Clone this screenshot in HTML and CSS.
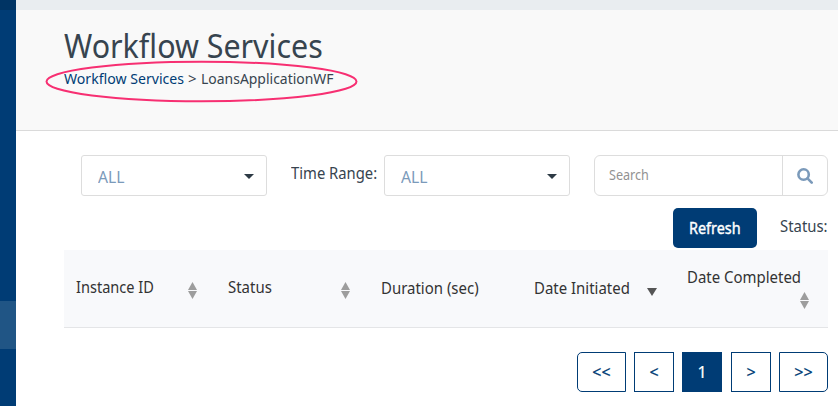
FILE: index.html
```
<!DOCTYPE html>
<html lang="en">
<head>
<meta charset="utf-8">
<title>Workflow Services</title>
<link rel="stylesheet" href="styles.css">
</head>
<body>
<svg class="symbols" width="0" height="0" aria-hidden="true">
  <symbol id="sort" viewBox="0 0 9 17"><path d="M4.5 0 9 8H0zM0 9h9L4.5 17z"/></symbol>
  <symbol id="caret" viewBox="0 0 10 5"><path d="M0 0h10L5 5z"/></symbol>
</svg>
<aside class="sidebar"><div class="side-top"></div><div class="side-active"></div></aside>
<div class="page">
  <div class="topbar"></div>
  <header class="heading">
    <h1><span class="fit title">Workflow Services</span></h1>
    <nav class="crumbs"><a class="fit crumb-link">Workflow Services</a><span class="fit crumb-sep">&gt;</span><span class="fit crumb-now">LoansApplicationWF</span></nav>
    <svg class="ring" width="314" height="44" viewBox="0 0 314 44"><ellipse cx="156.5" cy="21.5" rx="155" ry="19.8"/></svg>
  </header>
  <main>
    <div class="filters">
      <div class="select"><span class="fit all">ALL</span><svg class="caret" width="10" height="5"><use href="#caret"/></svg></div>
      <label class="range"><span class="fit range-text">Time Range:</span></label>
      <div class="select"><span class="fit all">ALL</span><svg class="caret" width="10" height="5"><use href="#caret"/></svg></div>
      <div class="search">
        <div class="search-input"><span class="fit search-text">Search</span></div>
        <div class="search-button"><svg width="16" height="16" viewBox="0 0 16 16"><circle cx="6.6" cy="6.5" r="5.2"/><path d="m10.5 10.4 4.2 4.2"/></svg></div>
      </div>
    </div>
    <div class="actions"><button class="refresh"><span class="fit refresh-text">Refresh</span></button><span class="status"><span class="fit status-text">Status:</span></span></div>
    <div class="table-head">
      <div class="th"><span class="fit narrow">Instance ID</span><svg class="sort" width="9" height="17"><use href="#sort"/></svg></div>
      <div class="th"><span class="fit label">Status</span><svg class="sort" width="9" height="17"><use href="#sort"/></svg></div>
      <div class="th lower"><span class="fit label">Duration (sec)</span></div>
      <div class="th lower"><span class="fit label">Date Initiated</span><svg class="down" width="10" height="8" viewBox="0 0 10 8"><path d="M0 0h10L5 8z"/></svg></div>
      <div class="th wrap"><span class="fit label">Date Completed</span><svg class="sort" width="9" height="17"><use href="#sort"/></svg></div>
    </div>
    <nav class="pager"><a class="wide first">&lt;&lt;</a><a>&lt;</a><a class="current">1</a><a class="next">&gt;</a><a class="wide last">&gt;&gt;</a></nav>
  </main>
</div>
</body>
</html>
```
FILE: styles.css
```
* { box-sizing: border-box; }
body { margin: 0; display: flex; width: 838px; height: 406px; overflow: hidden; background: #fff; color: #37444f; font: 16px/20px "Noto Sans", "Open Sans", sans-serif; }
.symbols { position: absolute; }
svg { display: block; flex: none; }
.fit { display: inline-block; white-space: nowrap; transform-origin: 0 50%; }
.sidebar { width: 16px; height: 406px; background: #003c75; flex: none; }
.side-top { height: 10px; background: #003464; }
.side-active { height: 48px; margin-top: 291px; background: #205585; }
.page { flex: 1; min-width: 0; }
.topbar { height: 10px; background: #e9edf0; }
.heading { position: relative; height: 121px; padding: 16px 0 0 48px; background: #f9f9f9; border-bottom: 1px solid #dadada; }
h1 { margin: 0; height: 40px; font-size: 32px; line-height: 40px; font-weight: 400; }
.title { transform: scaleX(.95); }
.crumbs { display: flex; height: 20px; margin-top: 2px; font-size: 15px; }
.crumb-link { width: 124px; color: #003c75; transform: scaleX(.94); }
.crumb-sep { width: 13px; }
.crumb-now { transform: scaleX(.93); }
.ring { position: absolute; left: 29px; top: 50px; fill: none; stroke: #f72f72; stroke-width: 2; }
main { padding: 24px 10px 0 48px; }
.filters { display: flex; height: 41px; padding-left: 17px; }
.select { display: flex; align-items: center; justify-content: space-between; width: 186px; height: 41px; padding: 3px 12px 0 16px; border: 1px solid #ddd; border-radius: 3px; color: #7b9aba; }
.all { transform: scaleX(.98); }
.caret { margin-bottom: 2px; fill: #2d3a45; }
.range { width: 117px; padding: 8px 0 0 24px; }
.range-text { transform: scaleX(.925); }
.search { display: flex; width: 234px; height: 41px; margin-left: 24px; border: 1px solid #ddd; border-radius: 6px; }
.search-input { width: 188px; padding: 9px 0 0 14px; border-right: 1px solid #ddd; color: #929292; font-size: 14px; }
.search-text { transform: scaleX(.9); }
.search-button { padding: 12px 0 0 14px; }
.search-button svg { fill: none; stroke: #7b9aba; stroke-width: 2.6; stroke-linecap: round; }
.actions { display: flex; height: 54px; padding: 12px 0 0 609px; }
.refresh { flex: none; width: 84px; height: 40px; padding: 0 0 0 16px; border: 0; border-radius: 5px; background: #003c75; color: #fff; font: inherit; text-align: left; -webkit-text-stroke: .4px #fff; }
.refresh-text { transform: scaleX(.9); }
.status { width: 71px; padding: 8px 0 0 23px; }
.status-text { transform: scaleX(.93); }
.table-head { display: grid; grid-template-columns: 152px 153px 153px 153px 153px; height: 78px; background: #f8f9fb; border-bottom: 1px solid #e4e5e7; color: #333; }
.th { display: flex; justify-content: space-between; padding: 27px 19px 0 12px; }
.th.lower { padding-top: 28px; }
.sort { margin-top: 5px; fill: #9d9d9d; }
.down { margin: 10px -1px 0 0; fill: #555; }
.th.wrap { flex-direction: column; justify-content: flex-start; padding-top: 17px; }
.wrap .sort { align-self: flex-end; }
.narrow { transform: scaleX(.91); }
.label { transform: scaleX(.935); }
.pager { display: flex; justify-content: flex-end; gap: 8px; margin-top: 24px; }
.pager a { width: 40px; height: 40px; border: 1px solid #003c75; color: #003c75; text-align: center; line-height: 39px; -webkit-text-stroke: .2px; }
.pager .wide { width: 49px; }
.pager .first { border-radius: 5px 0 0 5px; }
.pager .last { border-radius: 0 5px 5px 0; }
.pager .current { background: #003c75; color: #fff; }
.pager .next { margin-left: 1px; }
```
